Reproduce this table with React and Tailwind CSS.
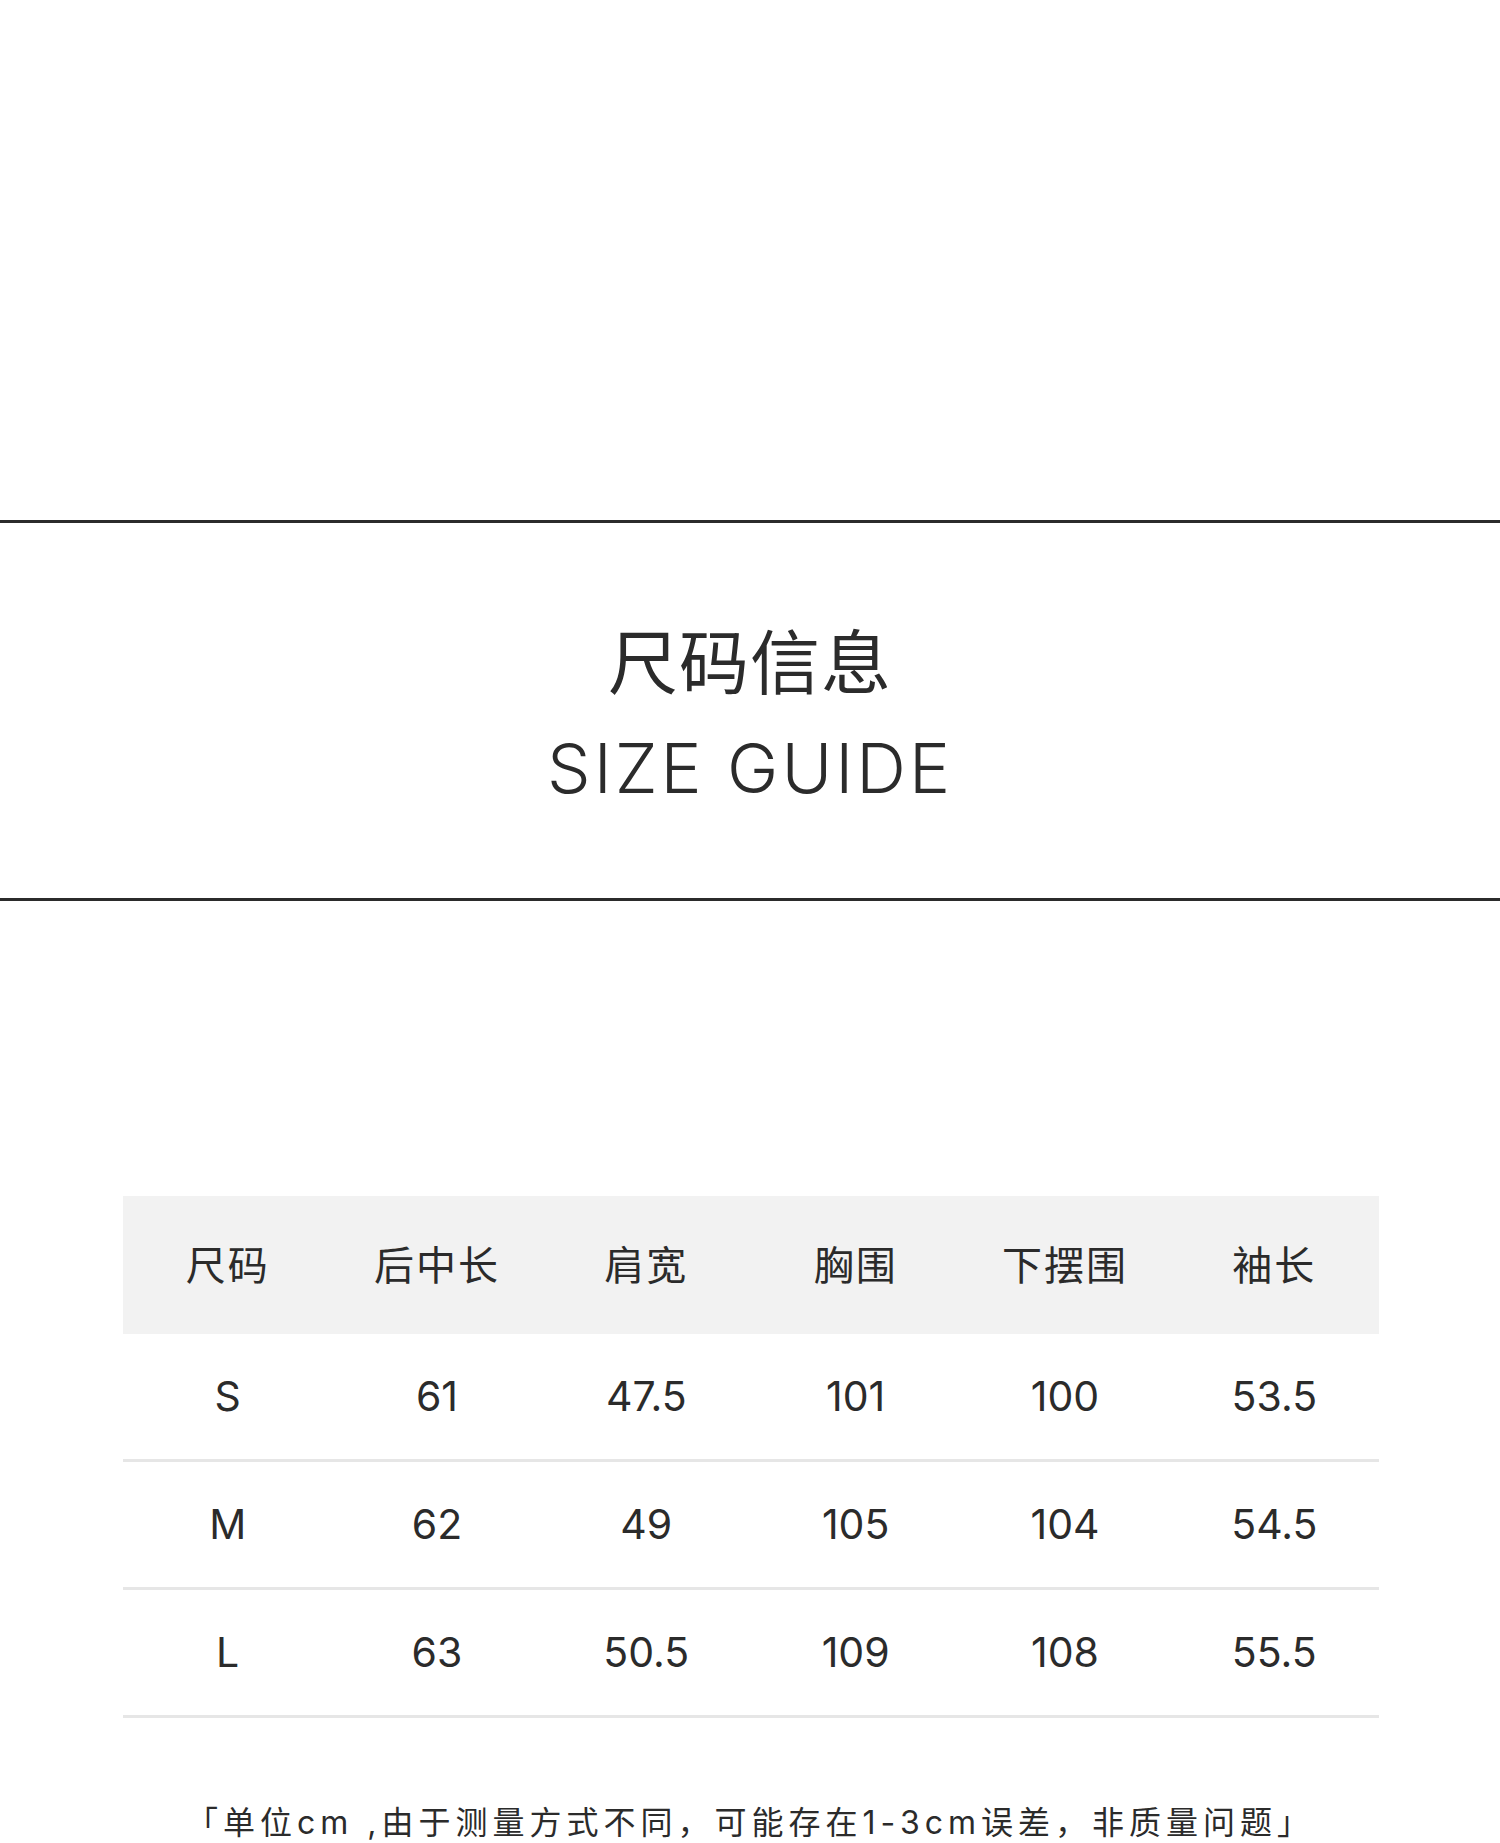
import React from 'react'

const HEAD = ['尺码', '后中长', '肩宽', '胸围', '下摆围', '袖长']
const ROWS = [
  ['S', '61', '47.5', '101', '100', '53.5'],
  ['M', '62', '49', '105', '104', '54.5'],
  ['L', '63', '50.5', '109', '108', '55.5'],
]

const cjk = { fontFamily: '"Noto Sans CJK SC", "Noto Sans", sans-serif' }
const latin = { fontFamily: 'Inter, "Noto Sans CJK SC", sans-serif' }

export default function App() {
  return (
    <div className="w-[1500px] h-[1843px] overflow-hidden bg-white text-[#2b2b2b]">
      <div className="h-[520px]" />

      {/* title band */}
      <div className="h-[381px] border-y-[3px] border-[#2b2b2b] flex flex-col items-center pt-[96px]">
        <div className="text-[70px] leading-[80px] tracking-[1px]" style={cjk}>尺码信息</div>
        <div className="mt-[29px] text-[69px] leading-[80px] font-light tracking-[3px]" style={latin}>SIZE GUIDE</div>
      </div>

      {/* size table */}
      <div className="mt-[295px] ml-[123px] w-[1256px]">
        <div className="grid grid-cols-6 h-[138px] pb-[4px] bg-[#f2f2f2] items-center">
          {HEAD.map(h => (
            <div key={h} className="text-center text-[40px] leading-none tracking-[2px]" style={cjk}>{h}</div>
          ))}
        </div>
        {ROWS.map(r => (
          <div key={r[0]} className="grid grid-cols-6 h-[128px] border-b-[3px] border-[#e6e6e6] items-center">
            {r.map((v, i) => (
              <div key={i} className="text-center text-[41px] leading-none" style={latin}>{v}</div>
            ))}
          </div>
        ))}
      </div>

      <p className="mt-[89px] text-center text-[32px] leading-[32px] tracking-[5px]" style={latin}>
        「单位cm ,由于测量方式不同，可能存在1-3cm误差，非质量问题」
      </p>
    </div>
  )
}
